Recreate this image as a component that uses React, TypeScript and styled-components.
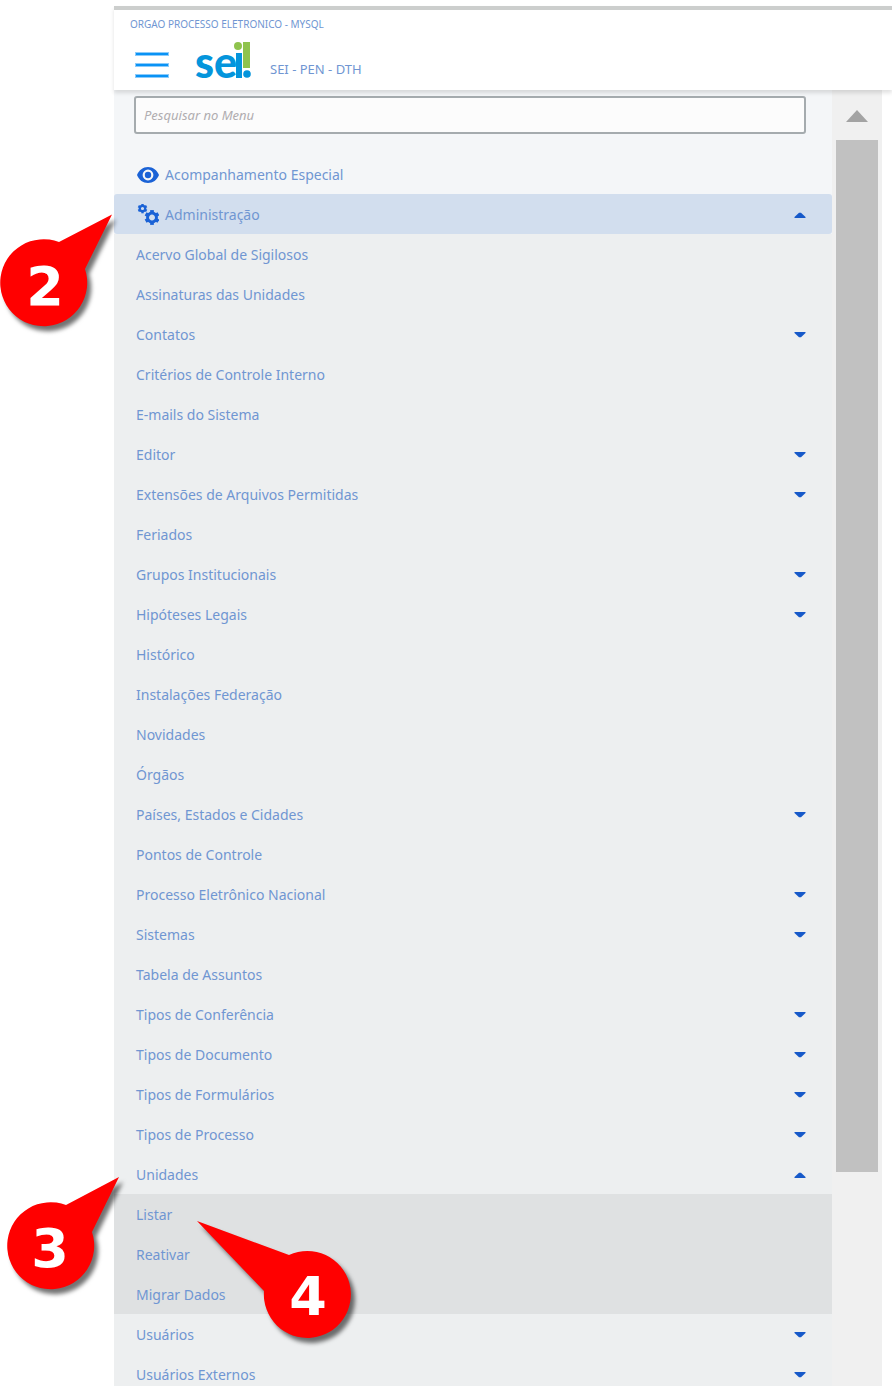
import React, { useState } from "react";
import styled, { createGlobalStyle, css } from "styled-components";

const GlobalStyle = createGlobalStyle`
  * { box-sizing: border-box; }
  body { margin: 0; background: #fff; font-family: "Noto Sans", "Open Sans", sans-serif; }
  button, input { font: inherit; }
`;

const ink = "#7096d2";
const accent = "#1659c9";

const Page = styled.div`
  position: relative;
  display: flex;
  flex-direction: column;
  height: 100vh;
  overflow: hidden;
  padding: 6px 0 0 114px;
`;

const Header = styled.header`
  position: relative;
  z-index: 1;
  flex: none;
  height: 84px;
  padding: 6px 16px 0;
  border-top: 4px solid #cccecd;
  background: #fff;
  box-shadow: 0 3px 4px rgba(0, 0, 0, 0.12);
`;

const OrgName = styled.div`
  font-size: 10px;
  line-height: 16px;
  color: ${ink};
`;

const Brand = styled.div`
  display: flex;
  align-items: flex-end;
  height: 48px;
  padding-left: 5px;
`;

const MenuButton = styled.button`
  display: flex;
  padding: 0;
  border: 0;
  background: none;
  cursor: pointer;
`;

const LogoLink = styled.a`
  display: flex;
  margin-left: 26px;
`;

const SystemName = styled.span`
  margin-left: 17px;
  font-size: 13px;
  line-height: 22px;
  color: ${ink};
`;

const Body = styled.div`
  flex: 1;
  min-height: 0;
  display: flex;
  padding-right: 10px;
`;

const Sidebar = styled.nav`
  flex: 1;
  min-width: 0;
  overflow: hidden;
  background: #f4f6f8;
`;

const SearchBox = styled.div`
  padding: 6px 26px 20px 20px;
`;

const SearchInput = styled.input`
  display: block;
  width: 100%;
  height: 38px;
  padding: 0 8px;
  border: 2px solid #a5abae;
  border-radius: 3px;
  background: #fcfcfc;
  font-size: 13px;
  font-style: italic;
  color: #555;
  &::placeholder { color: #b0adb0; opacity: 1; }
`;

const List = styled.ul<{ $tone?: string }>`
  margin: 0;
  padding: 0;
  list-style: none;
  background: ${(p) => p.$tone ?? "transparent"};
`;

const rowStyle = css`
  display: flex;
  align-items: center;
  width: 100%;
  height: 40px;
  padding: 2px 26px 0 22px;
  border: 0;
  background: none;
  font-size: 14px;
  line-height: 20px;
  color: ${ink};
  text-align: left;
  text-decoration: none;
  cursor: pointer;
`;

const RowLink = styled.a`${rowStyle}`;

const RowButton = styled.button<{ $active?: boolean }>`
  ${rowStyle}
  ${(p) => p.$active && css`background: #d2deee; border-radius: 3px;`}
`;

const RowIcon = styled.span`
  display: flex;
  width: 29px;
`;

const Label = styled.span`
  flex: 1;
`;

const Track = styled.div`
  flex: 0 0 50px;
  display: flex;
  flex-direction: column;
  background: #f0f0f0;
  padding: 0 4px;
`;

const TrackArrow = styled.button`
  flex: 0 0 50px;
  display: flex;
  align-items: center;
  justify-content: center;
  padding: 2px 0 0;
  border: 0;
  background: none;
`;

const TrackRail = styled.div`
  flex: 1;
`;

const Thumb = styled.div`
  height: 82.8%;
  background: #c1c1c1;
`;

const Pin = styled.svg<{ $x: number; $y: number }>`
  position: absolute;
  z-index: 2;
  left: ${(p) => p.$x}px;
  top: ${(p) => p.$y}px;
  overflow: visible;
  pointer-events: none;
  filter: drop-shadow(4px 5px 2px rgba(0, 0, 0, 0.55));
`;

const PinText = styled.text`
  font-family: "DejaVu Sans", Verdana, sans-serif;
  font-size: 54px;
  font-weight: 700;
  fill: #fff;
  text-anchor: middle;
`;

const LogoMark = styled.svg`
  overflow: visible;
`;

const LogoText = styled.text`
  font-family: Lato, sans-serif;
  font-size: 43px;
  font-weight: 900;
  fill: #0495dc;
`;

type Item = { label: string; children?: string[]; more?: boolean };

const adminItems: Item[] = [
  { label: "Acervo Global de Sigilosos" },
  { label: "Assinaturas das Unidades" },
  { label: "Contatos", more: true },
  { label: "Critérios de Controle Interno" },
  { label: "E-mails do Sistema" },
  { label: "Editor", more: true },
  { label: "Extensões de Arquivos Permitidas", more: true },
  { label: "Feriados" },
  { label: "Grupos Institucionais", more: true },
  { label: "Hipóteses Legais", more: true },
  { label: "Histórico" },
  { label: "Instalações Federação" },
  { label: "Novidades" },
  { label: "Órgãos" },
  { label: "Países, Estados e Cidades", more: true },
  { label: "Pontos de Controle" },
  { label: "Processo Eletrônico Nacional", more: true },
  { label: "Sistemas", more: true },
  { label: "Tabela de Assuntos" },
  { label: "Tipos de Conferência", more: true },
  { label: "Tipos de Documento", more: true },
  { label: "Tipos de Formulários", more: true },
  { label: "Tipos de Processo", more: true },
  { label: "Unidades", more: true, children: ["Listar", "Reativar", "Migrar Dados"] },
  { label: "Usuários", more: true },
  { label: "Usuários Externos", more: true },
];

function Caret({ up }: { up?: boolean }) {
  return (
    <svg width="12" height="6" viewBox="0 0 12 6" aria-hidden="true">
      <path d={up ? "M0.5 6 V5 L5 0.8 H7 L11.5 5 V6Z" : "M0.5 0 V1 L5 5.2 H7 L11.5 1 V0Z"} fill={accent} />
    </svg>
  );
}

function EyeIcon() {
  return (
    <svg width="23" height="16" viewBox="0 0 23 16" aria-hidden="true">
      <path
        d="M12 0C7 0 3 3 1 8c2 5 6 8 11 8s9-3 11-8C21 3 17 0 12 0Z M12 13.4a5.4 5.4 0 1 1 0-10.8 5.4 5.4 0 0 1 0 10.8Z"
        fill="#1a62d6"
        fillRule="evenodd"
      />
      <circle cx="12" cy="8" r="3.2" fill="#1a62d6" />
    </svg>
  );
}

function Gear({ cx, cy, r, hole }: { cx: number; cy: number; r: number; hole: number }) {
  const tooth = r * 0.5;
  return (
    <g transform={`translate(${cx} ${cy})`} fill="none" stroke="#1a62d6">
      <circle r={(r * 0.8 + hole) / 2} strokeWidth={r * 0.8 - hole} />
      {[0, 60, 120, 180, 240, 300].map((a) => (
        <path key={a} d={`M0 ${-r * 0.65}V${-r}`} strokeWidth={tooth} transform={`rotate(${a})`} />
      ))}
    </g>
  );
}

function GearsIcon() {
  return (
    <svg width="23" height="22" viewBox="0 0 23 22" aria-hidden="true">
      <Gear cx={6.5} cy={4.5} r={4.8} hole={1.6} />
      <Gear cx={16} cy={13.5} r={7.4} hole={3} />
    </svg>
  );
}

function Logo() {
  return (
    <LogoMark width="58" height="38" viewBox="0 0 58 38" role="img" aria-label="sei!">
      <LogoText x="0" y="36">se</LogoText>
      <rect x="41" y="11" width="6" height="25" fill="#0495dc" />
      <circle cx="43" cy="4" r="4" fill="#8fc34d" />
      <path d="M48 0h7v26h-7z" fill="#8fc34d" />
      <circle cx="52" cy="32" r="3.8" fill="#0495dc" />
    </LogoMark>
  );
}

function AdminEntry({ item }: { item: Item }) {
  const [open, setOpen] = useState(Boolean(item.children));
  if (!item.more) {
    return <li><RowLink href="#"><Label>{item.label}</Label></RowLink></li>;
  }
  return (
    <li>
      <RowButton type="button" aria-expanded={open} onClick={() => setOpen(!open)}>
        <Label>{item.label}</Label>
        <Caret up={open} />
      </RowButton>
      {open && item.children && (
        <List $tone="#dfe1e2">
          {item.children.map((name) => (
            <li key={name}><RowLink href="#"><Label>{name}</Label></RowLink></li>
          ))}
        </List>
      )}
    </li>
  );
}

export default function App() {
  const [adminOpen, setAdminOpen] = useState(true);
  return (
    <Page>
      <GlobalStyle />
      <Header>
        <OrgName>ORGAO PROCESSO ELETRONICO - MYSQL</OrgName>
        <Brand>
          <MenuButton type="button" aria-label="Menu">
            <svg width="34" height="32" viewBox="0 0 34 32" aria-hidden="true">
              <path d="M0 6H34M0 17H34M0 28H34" stroke="#8ccbfa" strokeWidth="4" />
              <path d="M1 6H33M1 17H33M1 28H33" stroke="#0a93f5" strokeWidth="2" />
            </svg>
          </MenuButton>
          <LogoLink href="#"><Logo /></LogoLink>
          <SystemName>SEI - PEN - DTH</SystemName>
        </Brand>
      </Header>
      <Body>
        <Sidebar aria-label="Menu principal">
          <SearchBox>
            <SearchInput type="text" placeholder="Pesquisar no Menu" aria-label="Pesquisar no Menu" />
          </SearchBox>
          <List>
            <li>
              <RowLink href="#">
                <RowIcon><EyeIcon /></RowIcon>
                <Label>Acompanhamento Especial</Label>
              </RowLink>
            </li>
            <li>
              <RowButton type="button" $active aria-expanded={adminOpen} onClick={() => setAdminOpen(!adminOpen)}>
                <RowIcon><GearsIcon /></RowIcon>
                <Label>Administração</Label>
                <Caret up={adminOpen} />
              </RowButton>
              {adminOpen && (
                <List $tone="#edeff0">
                  {adminItems.map((item) => <AdminEntry key={item.label} item={item} />)}
                </List>
              )}
            </li>
          </List>
        </Sidebar>
        <Track>
          <TrackArrow type="button" aria-label="Rolar para cima">
            <svg width="22" height="12" viewBox="0 0 22 12" aria-hidden="true">
              <path d="M0 12L11 0L22 12Z" fill="#a3a3a3" />
            </svg>
          </TrackArrow>
          <TrackRail><Thumb /></TrackRail>
        </Track>
      </Body>
      <Pin $x={0} $y={214} width="113" height="114" viewBox="0 0 113 114">
        <path d="M112 0.5L59 28A43.5 43.5 0 1 0 85 55Z" fill="#f00" />
        <PinText x="45" y="91">2</PinText>
      </Pin>
      <Pin $x={7} $y={1177} width="113" height="114" viewBox="0 0 113 114">
        <path d="M112 0L59 28A43.5 43.5 0 1 0 85 55Z" fill="#f00" />
        <PinText x="43" y="90">3</PinText>
      </Pin>
      <Pin $x={197} $y={1221} width="155" height="118" viewBox="0 0 155 118">
        <path d="M0 0L92 34A43.5 43.5 0 1 1 67 70Z" fill="#f00" />
        <PinText x="111" y="94">4</PinText>
      </Pin>
    </Page>
  );
}
